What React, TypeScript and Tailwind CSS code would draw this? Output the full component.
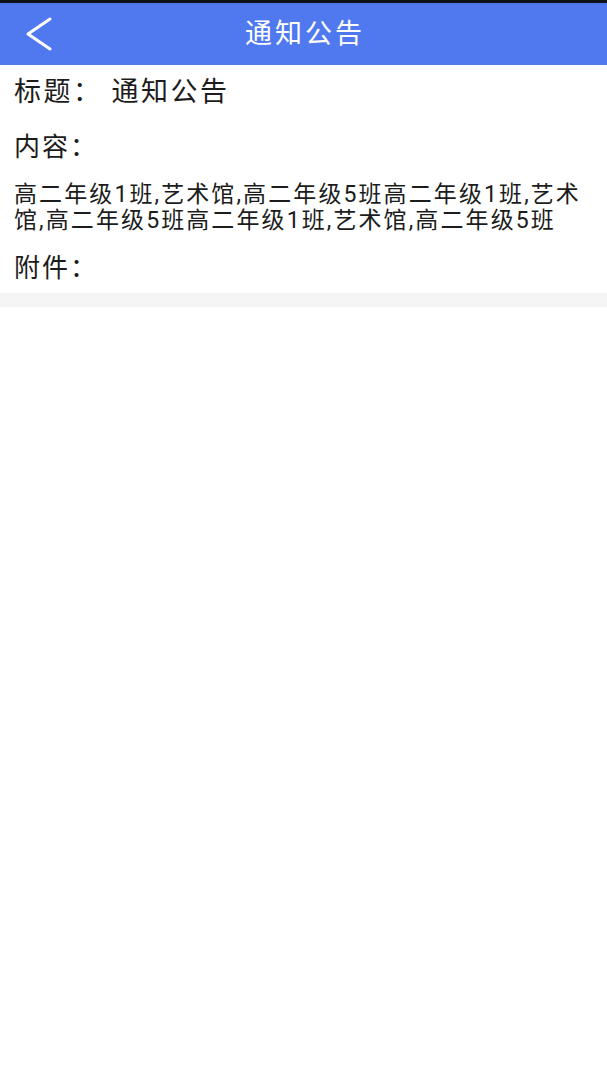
import React from "react";

const font = { fontFamily: 'Roboto, "Noto Sans CJK SC", "Noto Sans", sans-serif' };

export default function App() {
  return (
    <div className="w-[607px] min-h-[1080px] bg-white text-[#1c1c1c]" style={font}>
      <div className="h-[3px] bg-[#10121c]" />
      <div className="relative h-[62px] bg-[#5079ef] flex items-center justify-center">
        <button className="absolute left-[24px] top-[14px] w-[30px] h-[34px] flex items-center justify-center">
          <svg width="30" height="34" viewBox="0 0 30 34" fill="none">
            <path d="M26 2 L4 17 L26 32" stroke="white" strokeWidth="3" strokeLinecap="round" strokeLinejoin="round" />
          </svg>
        </button>
        <h1 className="text-white text-[27px] leading-[30px] tracking-[3px] font-normal pl-[3px]">通知公告</h1>
      </div>
      <div className="px-[14px]">
        <div className="flex items-center h-[54px] text-[27px] tracking-[2.5px]">
          <span>标题：</span>
          <span className="ml-[9px]">通知公告</span>
        </div>
        <div className="mt-[3px] h-[50px] flex items-center text-[26px] tracking-[2px]">内容：</div>
        <p className="mt-[10px] text-[23px] leading-[26px] tracking-[2.1px] break-all">
          高二年级1班,艺术馆,高二年级5班高二年级1班,艺术馆,高二年级5班高二年级1班,艺术馆,高二年级5班
        </p>
        <div className="mt-[10px] h-[49px] flex items-center text-[26px] tracking-[2px]">附件：</div>
      </div>
      <div className="h-[14px] bg-[#f5f5f5]" />
    </div>
  );
}
